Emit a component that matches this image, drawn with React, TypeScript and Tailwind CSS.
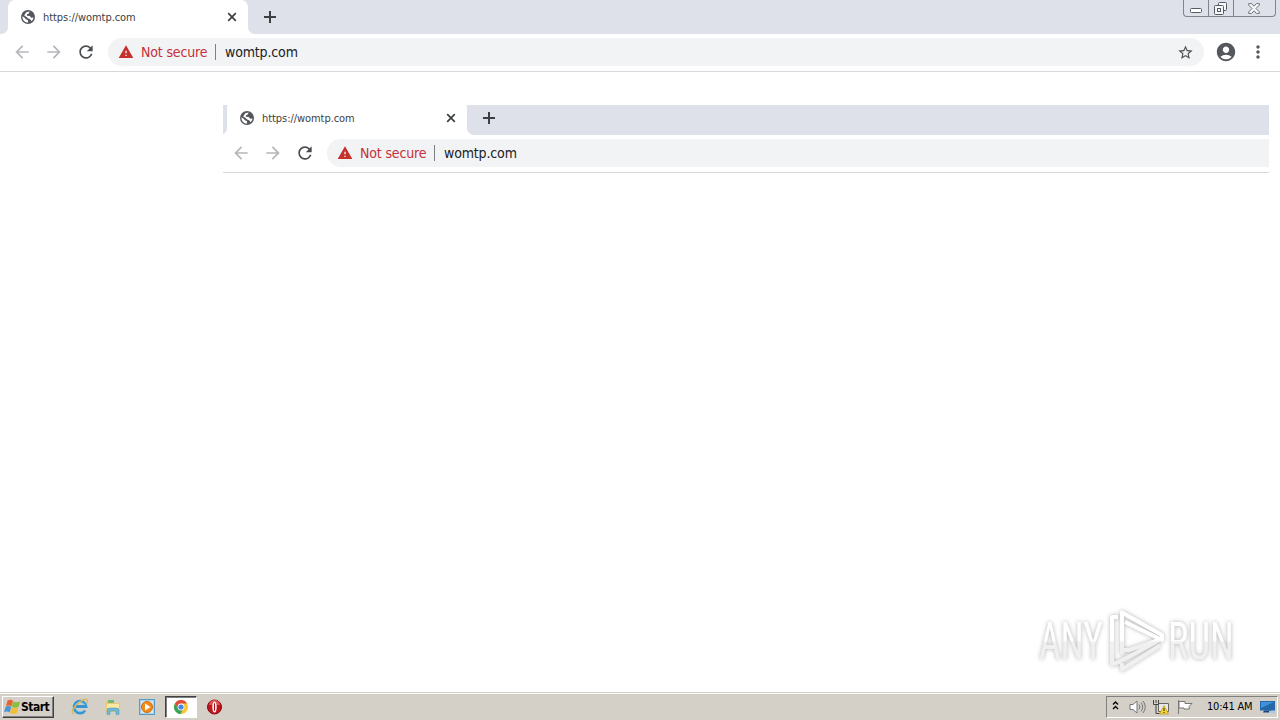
import type { ReactNode } from "react";
import {
  MdArrowBack,
  MdArrowForward,
  MdRefresh,
  MdWarning,
  MdStarBorder,
  MdAccountCircle,
  MdMoreVert,
} from "react-icons/md";

function GlobeIcon() {
  return (
    <svg width="16" height="16" viewBox="0 0 16 16" className="shrink-0">
      <circle cx="8" cy="8" r="7" fill="#54585d" />
      <path
        d="M2.4 7.2 5 9l.8 1.3 2 .6.4 2.6C5 13.8 2.2 11 2.4 7.2zM6.2 3.2 9.6 2.6 8.8 4.5 7 5.2 6.8 6.8 9.8 7l1.3 1.7 2.3-.3c-.2 1.6-.9 2.9-1.9 3.8l-1-1.6-2.3-1L6.6 8 4.2 6.6z"
        fill="#fff"
      />
    </svg>
  );
}

function CloseIcon() {
  return (
    <svg width="10" height="10" viewBox="0 0 10 10" stroke="#3c4043" strokeWidth="1.7">
      <path d="M1.2 1.2l7.6 7.6M8.8 1.2l-7.6 7.6" />
    </svg>
  );
}

function PlusIcon() {
  return (
    <svg width="12" height="12" viewBox="0 0 12 12" stroke="#3c4043" strokeWidth="2">
      <path d="M6 0v12M0 6h12" />
    </svg>
  );
}

function WindowControls() {
  return (
    <div className="ml-auto mr-1 flex h-[17px] w-[93px] rounded-b-[4px] border border-t-0 border-[#80848c]">
      <div className="flex w-[25px] items-center justify-center border-r border-[#80848c]">
        <svg width="12" height="5" viewBox="0 0 12 5" className="mt-1">
          <rect x=".5" y=".5" width="11" height="4" rx="1" fill="#fff" stroke="#555b66" />
        </svg>
      </div>
      <div className="flex w-[25px] items-center justify-center border-r border-[#80848c] pr-px">
        <svg width="13" height="13" viewBox="0 0 13 13" fill="#f6f7f9" stroke="#555b66">
          <rect x="4.5" y=".5" width="8" height="8" rx="1" />
          <rect x=".5" y="3.5" width="9" height="9" rx="1" />
          <rect x="3.5" y="6.5" width="3" height="3" />
        </svg>
      </div>
      <div className="flex flex-1 items-center justify-center pr-px">
        <svg width="12" height="11" viewBox="0 0 12 11" fill="#f6f7f9" stroke="#626873" strokeWidth=".9">
          <path d="M.7.6h3L6 3.2 8.3.6h3v1.5L8 5.5l3.3 3.4v1.5h-3L6 7.8l-2.3 2.6h-3V8.9L4 5.5.7 2.1z" />
        </svg>
      </div>
    </div>
  );
}

function BrowserBar({ controls }: { controls?: ReactNode }) {
  return (
    <div className="w-[1280px] shrink-0 border-b border-[#d6d8db] bg-white">
      <div className="flex h-[34px] bg-[#dee1e9]">
        <div className="w-2 bg-white">
          <div className="h-full rounded-br-[7px] bg-[#dee1e9]" />
        </div>
        <div className="flex w-60 items-center rounded-t-[7px] bg-white pl-3 pr-[11px]">
          <GlobeIcon />
          <span className="ml-[7px] w-[92px] whitespace-nowrap pt-px text-[11px] leading-[34px] tracking-[-0.06px] text-[#3c4043]">
            https://womtp.com
          </span>
          <span className="ml-auto">
            <CloseIcon />
          </span>
        </div>
        <div className="flex flex-1 bg-white">
          <div className="flex flex-1 rounded-bl-[7px] bg-[#dee1e9]">
            <div className="flex items-center pl-4">
              <PlusIcon />
            </div>
            {controls}
          </div>
        </div>
      </div>
      <div className="flex h-[37px] items-center pb-px">
        <div className="flex w-[108px] items-center gap-3 pl-3">
          <MdArrowBack size={20} color="#b5b7ba" />
          <MdArrowForward size={20} color="#b5b7ba" />
          <MdRefresh size={20} color="#484b4f" />
        </div>
        <div className="flex h-7 w-[1096px] items-center rounded-full bg-[#f1f3f4] pl-[10px] pr-[10px]">
          <MdWarning size={16} color="#c5302b" />
          <span className="ml-[7px] w-[67px] whitespace-nowrap text-[14px] tracking-[-0.15px] text-[#c5303a]">
            Not secure
          </span>
          <span className="ml-[7px] mr-[9px] h-4 w-px bg-[#7b8085]" />
          <span className="whitespace-nowrap text-[14px] tracking-[-0.15px] text-[#202124]">womtp.com</span>
          <MdStarBorder size={17} color="#4c5054" className="ml-auto" />
        </div>
        <MdAccountCircle size={22} color="#54575c" className="ml-[11px]" />
        <MdMoreVert size={20} color="#54575c" className="ml-[11px]" />
      </div>
    </div>
  );
}

function Watermark() {
  return (
    <svg
      width="250"
      height="74"
      viewBox="0 0 250 74"
      className="absolute left-[1030px] top-[604px] drop-shadow-[0_0_2px_rgba(0,0,0,0.3)]"
    >
      <defs>
        <linearGradient id="fade" x1="0" y1="0" x2="0" y2="74" gradientUnits="userSpaceOnUse">
          <stop offset="0.49" stopColor="#fff" />
          <stop offset="0.52" stopColor="#f0f0f0" />
        </linearGradient>
      </defs>
      <g fill="url(#fade)" fontFamily="Roboto, sans-serif" fontSize="51">
        <text x="9" y="55" textLength="64" lengthAdjust="spacingAndGlyphs">
          ANY
        </text>
        <text x="138" y="55" textLength="66" lengthAdjust="spacingAndGlyphs">
          RUN
        </text>
      </g>
      <g fill="none" stroke="url(#fade)" strokeWidth="4" strokeLinejoin="round">
        <path d="M88 13h-6v47l7-2 37-20" />
        <path d="M92 50V8.5l40 22.5v5L95 18" />
        <path d="M92 50v-4h7l30-10M92 59v6.5l38-24" />
      </g>
    </svg>
  );
}

function StartFlag() {
  return (
    <svg width="17" height="16" viewBox="0 0 17 16">
      <path d="M3.5 1.5q3-1.5 5.5.3L7.5 7.5Q4.5 5.5 2 7.3z" fill="#e8642c" />
      <path d="M9.3 2.2q3 2 7 0L14.5 8q-3 1.500-6.700 0z" fill="#8abe42" />
      <path d="M1.7 7.8Q4.5 6 7.2 8l-1.5 5.5Q3 11.5 0 13.3z" fill="#4b94d5" />
      <path d="M7.6 8.3q3 2 6.7 0L12.9 14q-3 2-6.7 0z" fill="#f4bc32" />
    </svg>
  );
}

function ExplorerIcon() {
  return (
    <svg width="18" height="17" viewBox="0 0 18 17" fill="none">
      <path d="M14 12.5A6 6 0 1 1 15 8.5H4" stroke="#3595d2" strokeWidth="2.8" />
      <path d="M13 12A5 5 0 1 1 14 7.5" stroke="#79c4ed" />
      <path d="M3 15.5C-1 16 2 9 8 4.5S18 0 16 5.5" stroke="#dfb64b" strokeWidth="1.3" />
    </svg>
  );
}

function FolderIcon() {
  return (
    <svg width="16" height="16" viewBox="0 0 16 16">
      <path d="M1 2h5l1 2h8v9H1z" fill="#e9ca70" />
      <path d="M3 1h6v3H3z" fill="#75b878" />
      <path d="M2 5h12v4H2z" fill="#fae9a5" />
      <path d="M2 15.5V12q0-3 3-3h6q3 0 3 3v3.5h-3V12H5v3.5z" fill="#6eb8dd" stroke="#4b94b9" strokeWidth=".5" />
    </svg>
  );
}

function MediaIcon() {
  return (
    <svg width="16" height="16" viewBox="0 0 16 16">
      <rect x=".5" y=".5" width="15" height="15" fill="#a9d0ea" stroke="#579bc9" />
      <path d="M2 2h12v12H2z" fill="#d7e9f4" />
      <circle cx="8" cy="8" r="5.5" fill="#f28a16" stroke="#d26b0d" />
      <path d="M6 4.5v7L11.5 8z" fill="#fff" />
    </svg>
  );
}

function ChromeIcon() {
  return (
    <svg width="14" height="14" viewBox="0 0 14 14">
      <circle cx="7" cy="7" r="7" fill="#f9c632" />
      <path d="M.9 3.5a7 7 0 0 1 12.2 0H7v3.5L4 8.7z" fill="#df4b3c" />
      <path d="M.9 3.5 4 8.7 7 10l1.5.4L6.5 14A7 7 0 0 1 .9 3.5z" fill="#36a45a" />
      <circle cx="7" cy="7" r="3.4" fill="#fff" />
      <circle cx="7" cy="7" r="2.6" fill="#4685ee" />
    </svg>
  );
}

function OperaIcon() {
  return (
    <svg width="15" height="16" viewBox="0 0 15 16">
      <circle cx="7.5" cy="8" r="7" fill="#bf171d" stroke="#85090f" />
      <path d="M2 6a5.5 5 0 0 1 11 0z" fill="#d95555" />
      <ellipse cx="7.5" cy="8" rx="2.2" ry="5.5" fill="#fff" />
      <ellipse cx="7.5" cy="8" rx=".6" ry="4.2" fill="#9d1016" />
    </svg>
  );
}

function Tray() {
  return (
    <div className="ml-auto mr-[2px] flex h-[22px] w-[172px] items-center border border-b-white border-l-[#808080] border-r-white border-t-[#808080] pl-[5px]">
      <svg width="7" height="9" viewBox="0 0 7 9" fill="none" stroke="#000" strokeWidth="1.4" className="mb-[2px]">
        <path d="M1 3.5 3.5 1 6 3.5M1 8l2.5-2.5L6 8" />
      </svg>
      <svg width="17" height="16" viewBox="0 0 17 16" fill="none" stroke="#777" className="ml-[10px]">
        <path d="M1 5.5h3L8 2v12l-4-3.5H1z" fill="#fff" />
        <path d="M10 5.5q2 2.5 0 5M12 3.5q3.5 4.5 0 9M14 2q4.5 6 0 12" />
      </svg>
      <svg width="16" height="16" viewBox="0 0 16 16" fill="none" stroke="#666" className="ml-[7px]">
        <path d="M5.5 4.5h10v8h-10z" fill="#e8e8e8" />
        <path d="M.5 1v4.5h5V1M3 1v3M3 5.5v9h6" stroke="#444" />
        <path d="M11 6.5 6.5 15h9z" fill="#f8d62f" stroke="#b89720" strokeWidth=".7" />
        <path d="M11 9v3M11 13v1" stroke="#222" />
      </svg>
      <svg width="17" height="16" viewBox="0 0 17 16" fill="#fff" stroke="#777" className="ml-[7px]">
        <path d="M2.5 1v14" />
        <path d="M3 2.5h6v2h7l-3 3 .5 2.5H8V9H3z" />
      </svg>
      <span className="ml-[14px] w-[46px] whitespace-nowrap pt-[2px] text-[11px] tracking-[-0.2px] text-black">
        10:41 AM
      </span>
      <svg width="16" height="14" viewBox="0 0 16 14" className="ml-[7px] shrink-0">
        <path d="M0 1h15v9.5H0z" fill="#2468ab" />
        <path d="M1 2h13L1 8z" fill="#3f92d5" />
        <path d="M4 10.5h7l1 2H3z" fill="#194576" />
        <path d="M9 11h6v2H9z" fill="#a6c9e5" />
      </svg>
    </div>
  );
}

function Taskbar() {
  return (
    <div className="flex h-7 items-center border-t border-[#d4d0c8] bg-[#d4d0c8] pl-[2px] shadow-[inset_0_1px_0_#fff]">
      <div className="flex h-[22px] w-[52px] items-center border border-b-[#404040] border-l-white border-r-[#404040] border-t-white pl-px shadow-[inset_-1px_-1px_0_#808080]">
        <StartFlag />
        <span className="pt-px text-[12px] font-bold leading-[18px] tracking-[-0.5px] text-black">Start</span>
      </div>
      <div className="ml-[17px] flex items-center">
        <ExplorerIcon />
        <span className="ml-4">
          <FolderIcon />
        </span>
        <span className="ml-[18px]">
          <MediaIcon />
        </span>
        <div className="ml-[10px] flex h-[22px] w-8 items-center justify-center border border-b-white border-l-[#404040] border-r-white border-t-[#404040] bg-white shadow-[inset_1px_1px_0_#808080]">
          <ChromeIcon />
        </div>
        <span className="ml-[10px]">
          <OperaIcon />
        </span>
      </div>
      <Tray />
    </div>
  );
}

export default function App() {
  return (
    <div className="relative flex h-[720px] w-[1280px] flex-col overflow-hidden bg-white font-['DejaVu_Sans_Condensed','DejaVu_Sans',sans-serif] [font-stretch:condensed]">
      <BrowserBar controls={<WindowControls />} />
      <main className="flex-1 pl-[223px] pt-[33px]">
        <div className="h-[68px] w-[1046px] overflow-hidden">
          <div className="-ml-1 -mt-1">
            <BrowserBar />
          </div>
        </div>
      </main>
      <Watermark />
      <Taskbar />
    </div>
  );
}
